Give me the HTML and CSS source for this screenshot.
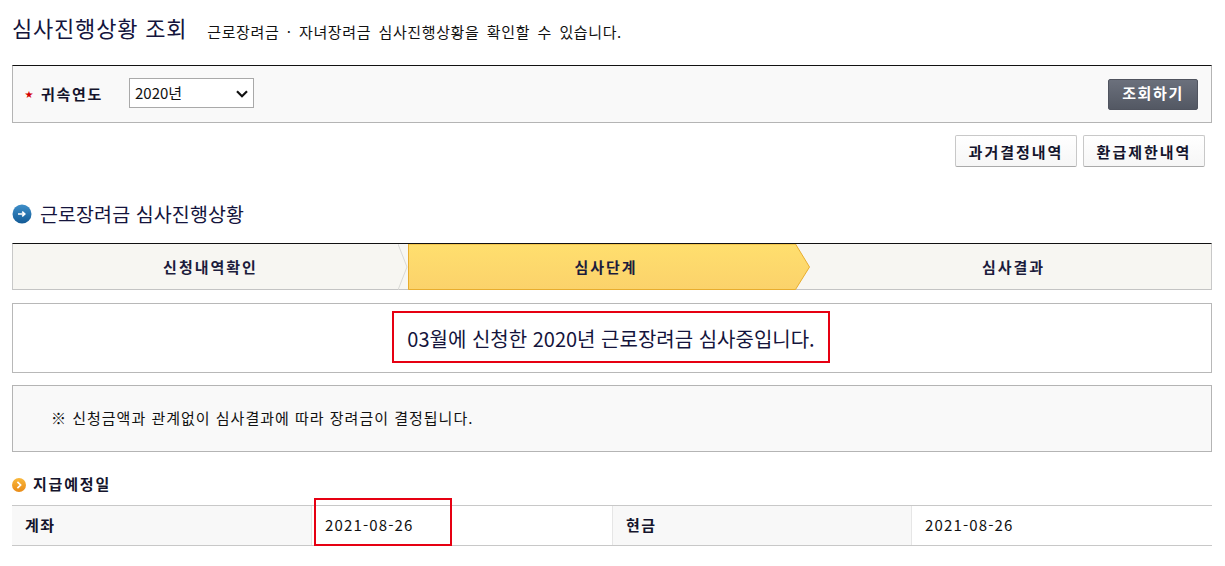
FILE: index.html
```html
<!DOCTYPE html>
<html lang="ko">
<head>
<meta charset="utf-8">
<title>심사진행상황 조회</title>
<link rel="stylesheet" href="styles.css">
</head>
<body>
<main class="page">
  <header class="title-row">
    <h1 class="title">심사진행상황 조회</h1>
    <p class="subtitle">근로장려금 · 자녀장려금 심사진행상황을 확인할 수 있습니다.</p>
  </header>

  <section class="search">
    <label class="search-label"><span class="req">★</span>귀속연도</label>
    <span class="year-wrap">
      <select class="year"><option>2020년</option></select>
      <svg class="year-arrow" viewBox="0 0 12 8" width="12" height="8"><path d="M1 1.2 6 6.2 11 1.2" fill="none" stroke="#111" stroke-width="2.2"/></svg>
    </span>
    <button class="btn-dark">조회하기</button>
  </section>

  <div class="actions">
    <button class="btn-light">과거결정내역</button>
    <button class="btn-light">환급제한내역</button>
  </div>

  <h2 class="section-title">
    <svg class="icon-blue" viewBox="0 0 20 20" width="20" height="20">
      <defs><linearGradient id="bl" x1="0" y1="0" x2="0" y2="1"><stop offset="0" stop-color="#3f8fc9"/><stop offset="1" stop-color="#125a96"/></linearGradient></defs>
      <circle cx="10" cy="10" r="9.5" fill="url(#bl)"/>
      <path d="M6 10h6.5M10.2 7.6 12.8 10l-2.6 2.4" fill="none" stroke="#fff" stroke-width="1.6"/>
    </svg>
    근로장려금 심사진행상황
  </h2>

  <ol class="steps">
    <li class="step step-first">
      <svg class="step-sep" viewBox="0 0 10 46" width="10" height="46"><path d="M0 0 9 23 0 46" fill="none" stroke="#d9d9d6"/></svg>
      신청내역확인
    </li>
    <li class="step step-on">
      <svg class="step-bg" viewBox="0 0 402 46" width="402" height="46">
        <defs><linearGradient id="yl" x1="0" y1="0" x2="0" y2="1"><stop offset="0" stop-color="#ffdf6e"/><stop offset="1" stop-color="#fbd26b"/></linearGradient></defs>
        <path d="M.5 0V45.5H387.5L401.5 23 387.5 0Z" fill="url(#yl)" stroke="#e8ad2e"/>
      </svg>
      <span class="step-text">심사단계</span>
    </li>
    <li class="step step-last">심사결과</li>
  </ol>

  <section class="result">
    <p class="result-text">03월에 신청한 2020년 근로장려금 심사중입니다.</p>
  </section>

  <section class="note">※ 신청금액과 관계없이 심사결과에 따라 장려금이 결정됩니다.</section>

  <h3 class="sub-title">
    <svg class="icon-orange" viewBox="0 0 14 14" width="14" height="14">
      <defs><linearGradient id="or" x1="0" y1="0" x2="0" y2="1"><stop offset="0" stop-color="#f9b83c"/><stop offset="1" stop-color="#e98b17"/></linearGradient></defs>
      <circle cx="7" cy="7" r="7" fill="url(#or)"/>
      <path d="M5.4 3.8 8.6 7l-3.2 3.2" fill="none" stroke="#fff" stroke-width="1.7"/>
    </svg>
    지급예정일
  </h3>

  <div class="pay">
    <div class="pay-head">계좌</div>
    <div class="pay-cell pay-marked">2021-08-26<span class="mark"></span></div>
    <div class="pay-head">현금</div>
    <div class="pay-cell">2021-08-26</div>
  </div>
</main>
</body>
</html>
```
FILE: styles.css
```css
* { box-sizing: border-box; }
html, body { margin: 0; padding: 0; background: #fff; }
body {
  font-family: "Noto Sans CJK KR", "Liberation Sans", sans-serif;
  color: #111;
  overflow: hidden;
}
.page { width: 1200px; margin-left: 12px; }

.title-row { display: flex; align-items: center; height: 57px; padding-bottom: 4px; }
.title { margin: 0; font-size: 22px; font-weight: 400; color: #14143c; letter-spacing: .8px; line-height: 30px; }
.subtitle { margin: 11px 0 0 20px; font-size: 15px; letter-spacing: .6px; word-spacing: 2.7px; color: #111; line-height: 20px; }

.search {
  margin-top: 8px;
  height: 58px;
  display: flex;
  align-items: center;
  background: #f9f9f9;
  border: 1px solid #b4b4b4;
  border-top-color: #111;
  padding: 0 13px 0 12px;
}
.search-label { font-size: 15px; font-weight: 700; color: #14142c; letter-spacing: 1.7px; width: 104px; display: flex; align-items: center; padding-bottom: 2px; }
.req { color: #d40000; width: 16px; font-size: 8px; letter-spacing: 0; }
.year-wrap { position: relative; display: block; width: 125px; height: 30px; margin-bottom: 2px; }
.year {
  display: block; width: 125px; height: 30px; padding: 0 0 2px 5px;
  font: 15px "Noto Sans CJK KR", "Liberation Sans", sans-serif;
  color: #111; background: #fff; border: 1px solid #a9a9a9; border-radius: 0;
  appearance: none; -webkit-appearance: none;
}
.year-arrow { position: absolute; right: 6px; top: 12px; pointer-events: none; }
.btn-dark {
  margin-left: auto; width: 90px; height: 31px; padding: 0 0 4px;
  font: 700 15px "Noto Sans CJK KR", sans-serif; letter-spacing: 1.6px;
  color: #fff; background: linear-gradient(#6b707c, #535863);
  border: 1px solid #50545f; border-radius: 2px;
}

.actions { display: flex; justify-content: flex-end; gap: 6px; margin-top: 12px; padding-right: 7px; }
.btn-light {
  width: 122px; height: 32px; padding: 0;
  font: 700 15px "Noto Sans CJK KR", sans-serif; letter-spacing: 2px;
  color: #14142c; background: linear-gradient(#fff, #f6f6f6);
  border: 1px solid #c8c8c8; border-bottom-color: #aaa; border-radius: 2px;
}

.section-title {
  margin: 33px 0 0; height: 28px; padding-bottom: 2px;
  display: flex; align-items: center; gap: 8px;
  font-size: 19.5px; font-weight: 400; color: #14143c; letter-spacing: .1px;
}
.icon-blue { flex: none; margin-top: 2px; }

.steps {
  list-style: none; margin: 15px 0 0; padding: 0;
  height: 47px; display: flex;
  border-top: 1px solid #111;
  border-bottom: 1px solid #c4c4c4;
  border-left: 1px solid #c8c8c8;
  border-right: 1px solid #c8c8c8;
  background: #f7f6f2;
  font-size: 15px; font-weight: 700; letter-spacing: 2px; color: #1c1c3c;
}
.step { position: relative; display: flex; align-items: center; justify-content: center; height: 46px; padding-bottom: 2px; }
.step-first { width: 395px; }
.step-on { width: 402px; padding-right: 6px; }
.step-last { flex: 1; padding-left: 6px; }
.step-sep { position: absolute; right: 0; top: 0; }
.step-bg { position: absolute; left: 0; top: 0; }
.step-text { position: relative; }

.result {
  margin-top: 13px; height: 70px;
  display: flex; align-items: center; justify-content: center;
  border: 1px solid #b8b8b8; background: #fff;
}
.result-text {
  margin: 0 2px 3px 0; width: 438px; height: 52px; padding-top: 3px;
  border: 2px solid #e60012;
  display: flex; align-items: center; justify-content: center;
  font-size: 20px; color: #14143c; white-space: nowrap;
}

.note {
  margin-top: 12px; height: 67px; padding: 0 0 2px 38px;
  display: flex; align-items: center;
  border: 1px solid #b4b4b4; background: #f9f9f9;
  font-size: 15px; letter-spacing: 1px; color: #111;
}

.sub-title {
  margin: 23px 0 0; height: 20px;
  display: flex; align-items: center; gap: 7px;
  font-size: 15px; font-weight: 700; letter-spacing: 1.8px; color: #14142c;
  line-height: 18px; padding-bottom: 2px;
}
.icon-orange { flex: none; margin-top: 2px; }

.pay {
  margin-top: 10px; height: 41px;
  display: grid; grid-template-columns: 300px 300px 300px 300px;
  border-top: 1px solid #c8c8c8; border-bottom: 1px solid #c8c8c8;
}
.pay-head {
  display: flex; align-items: center; padding: 0 0 2px 13px;
  background: #f8f8f8; border-right: 1px solid #e6e6e6;
  font-size: 15px; font-weight: 700; letter-spacing: 1.5px; color: #14142c;
}
.pay-cell + .pay-head { border-left: 1px solid #e6e6e6; }
.pay-cell {
  position: relative; display: flex; align-items: center; padding: 0 0 3px 13px;
  font-size: 15px; letter-spacing: 1.15px; color: #111;
}
.mark {
  position: absolute; left: 2px; top: -8px;
  width: 138px; height: 48px; border: 2px solid #e60012;
}
```
